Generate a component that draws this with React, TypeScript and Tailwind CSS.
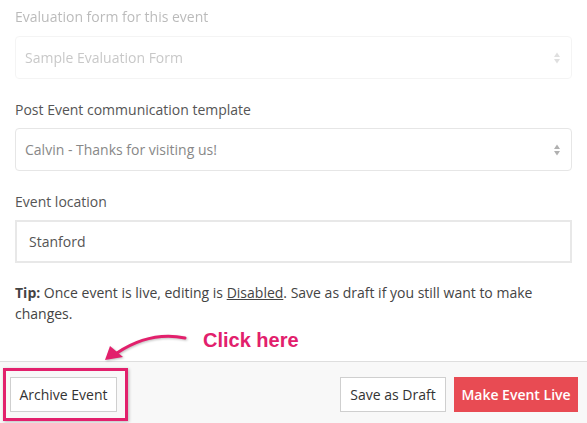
import React from 'react';

const SelectArrows = () => (
  <svg width="8" height="14" viewBox="0 0 8 14" className="shrink-0">
    <path d="M4 1.5 L7 6 L1 6 Z" fill="#b0b0b0" />
    <path d="M4 12.5 L7 8 L1 8 Z" fill="#b0b0b0" />
  </svg>
);

const FakeSelect = ({ value, textClass }: { value: string; textClass: string }) => (
  <div className="h-[43px] w-full flex items-center justify-between pl-[9px] pr-[10px] bg-white border border-[#e6e6e6] rounded-[4px]">
    <span className={textClass}>{value}</span>
    <SelectArrows />
  </div>
);

export default function App() {
  return (
    <div
      className="relative w-[587px] h-[423px] overflow-hidden bg-white text-[14px]"
      style={{ fontFamily: '"Open Sans", "Liberation Sans", sans-serif' }}
    >
      <div className="px-[15px] pt-[7px]">
        {/* disabled evaluation form */}
        <div className="opacity-40">
          <label className="block leading-[20px] text-[#555]">Evaluation form for this event</label>
          <div className="mt-[9px]">
            <FakeSelect value="Sample Evaluation Form" textClass="text-[#777]" />
          </div>
        </div>

        <label className="block mt-[21px] leading-[20px] text-[#555]">Post Event communication template</label>
        <div className="mt-[8px]">
          <FakeSelect value="Calvin - Thanks for visiting us!" textClass="text-[#888]" />
        </div>

        <label className="block mt-[21px] leading-[20px] text-[#555]">Event location</label>
        <div className="mt-[8px] h-[43px] flex items-center px-[12px] border-2 border-[#e8e8e8] text-[#555]">
          Stanford
        </div>

        <p className="mt-[19px] leading-[21px] text-[#444]">
          <b>Tip:</b> Once event is live, editing is <u>Disabled</u>. Save as draft if you still want to make changes.
        </p>
      </div>

      {/* annotation */}
      <div className="h-[37px] relative">
        <span
          className="absolute left-[203px] top-[4px] text-[20px] font-bold text-[#e2206c] leading-[24px]"
          style={{ fontFamily: '"Liberation Sans", Arial, sans-serif' }}
        >
          Click here
        </span>
      </div>

      <div className="border-t border-[#dedede] bg-[#f8f8f8] pt-[15px] pb-[15px] pl-[10px] pr-[9px] flex items-center justify-between">
        <div className="relative">
          <button className="h-[35px] w-[107px] bg-white border border-[#cfcfcf] text-[#333]">Archive Event</button>
          <div className="absolute left-[-7px] right-[-11px] top-[-9px] bottom-[-9px] border-[3px] border-[#e2206c] shadow-[1px_1px_3px_rgba(0,0,0,0.25)] pointer-events-none" />
        </div>
        <div className="flex gap-[8px]">
          <button className="h-[35px] w-[106px] bg-white border border-[#cfcfcf] text-[#333]">Save as Draft</button>
          <button className="h-[35px] w-[124px] bg-[#e84b53] text-white font-semibold">Make Event Live</button>
        </div>
      </div>

      <svg
        className="absolute left-[95px] top-[325px]"
        width="100"
        height="42"
        viewBox="0 0 100 42"
        style={{ filter: 'drop-shadow(1px 1px 1px rgba(0,0,0,0.25))' }}
      >
        <path d="M90 13 Q55 6 22 28" stroke="#e2206c" strokeWidth="3" fill="none" strokeLinecap="round" />
        <path d="M10 35 L15 21 L28 32 Z" fill="#e2206c" />
      </svg>
    </div>
  );
}
